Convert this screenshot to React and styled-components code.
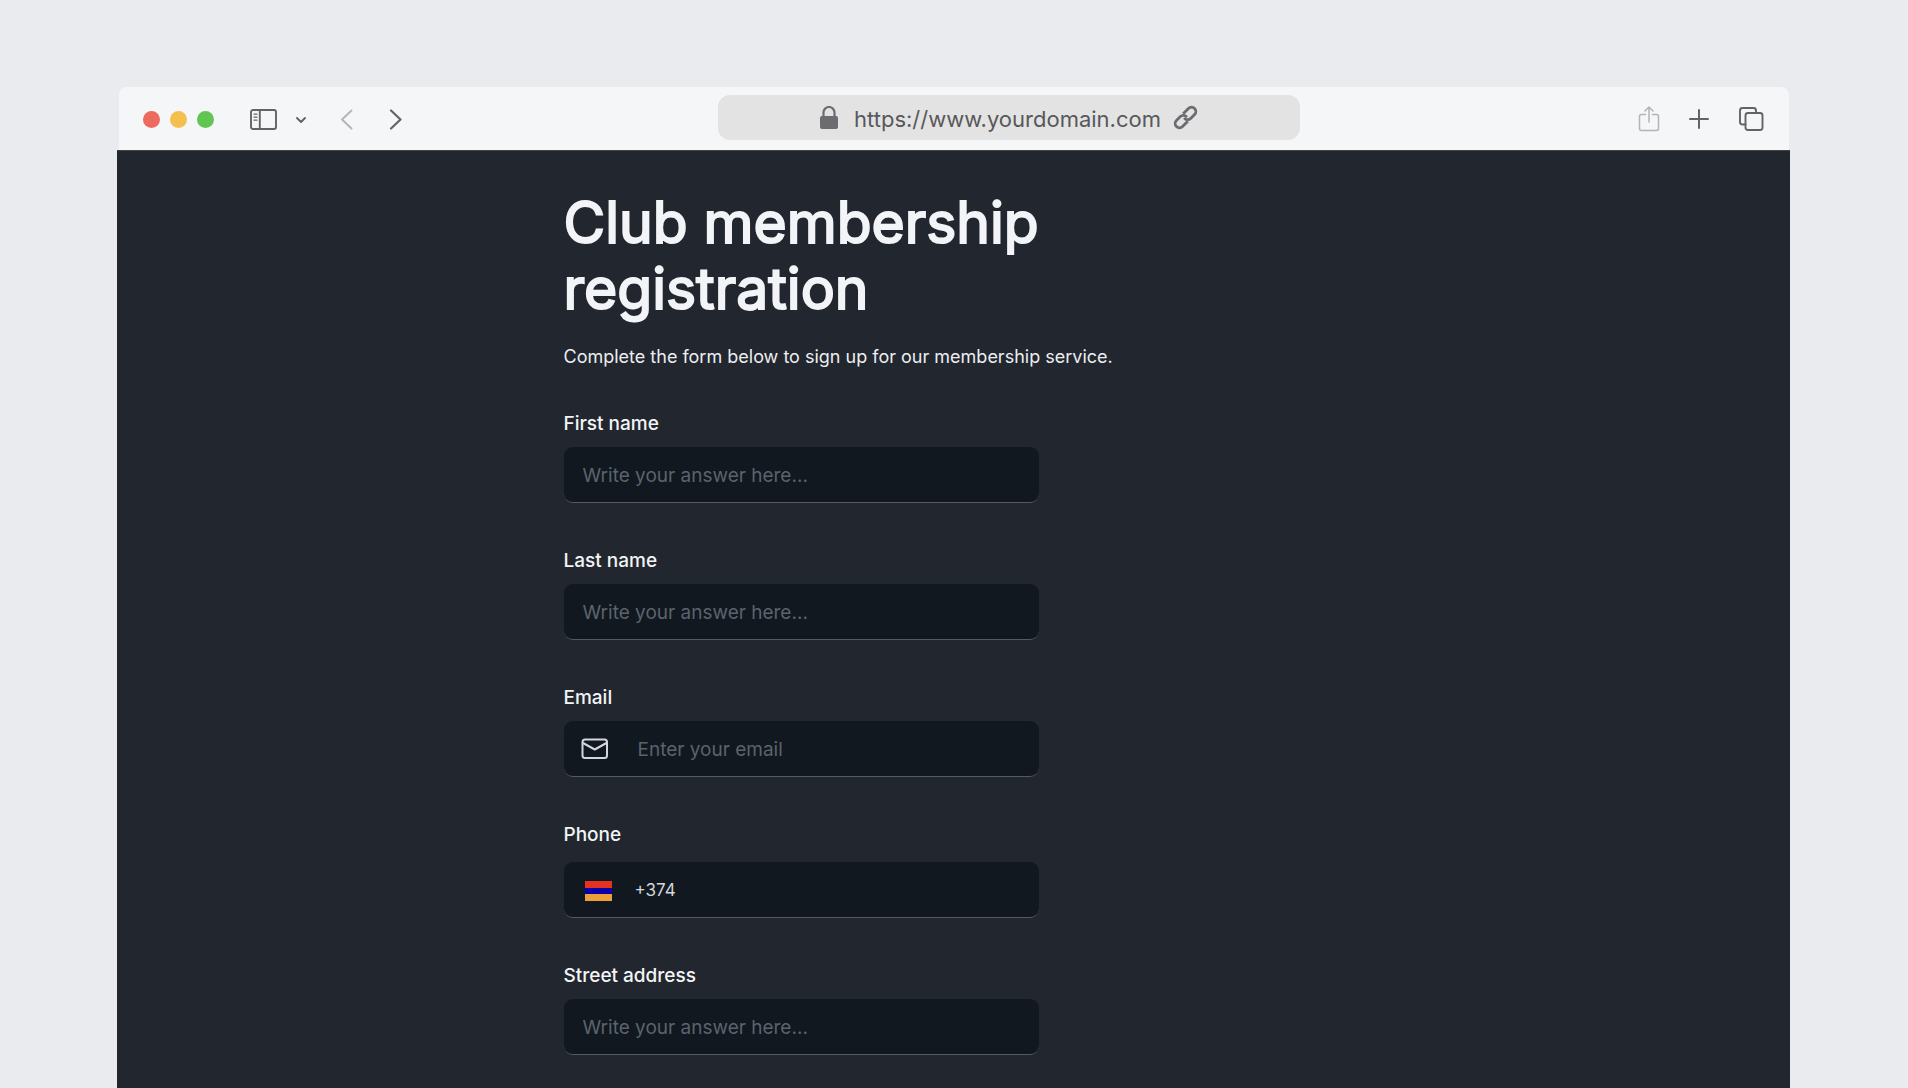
import styled, { createGlobalStyle } from "styled-components";
import React, { useState } from "react";

const GlobalStyle = createGlobalStyle`
  * { box-sizing: border-box; }
  body {
    margin: 0;
    background: #e9ebef;
    font-family: Inter, "Liberation Sans", sans-serif;
  }
`;

const Page = styled.div`
  display: flex;
  flex-direction: column;
  height: 100vh;
  padding: 87px 118px 0 117px;
  overflow: hidden;
`;

const Toolbar = styled.header`
  display: grid;
  grid-template-columns: 599fr 582fr 489fr;
  align-items: center;
  flex-shrink: 0;
  height: 63px;
  margin: 0 1px 0 2px;
  background: #f5f6f8;
  border-radius: 8px 8px 0 0;
`;

const Group = styled.div`
  display: flex;
  align-items: center;
  gap: ${(p) => p.$gap || 0}px;
  padding: ${(p) => p.$pad || "0"};
  justify-content: ${(p) => (p.$end ? "flex-end" : "flex-start")};
`;

const Dot = styled.span`
  width: 17px;
  height: 17px;
  border-radius: 50%;
  background: ${(p) => p.$color};
`;

const IconButton = styled.button`
  display: flex;
  padding: 0;
  border: 0;
  background: none;
  color: ${(p) => (p.$muted ? "#b4b4b5" : "#636364")};
  cursor: pointer;

  svg {
    display: block;
    fill: none;
    stroke: currentColor;
    stroke-linecap: round;
    stroke-linejoin: round;
  }
`;

const AddressBar = styled.div`
  display: flex;
  align-items: center;
  justify-content: center;
  height: 45px;
  margin-bottom: 2px;
  border-radius: 12px;
  background: #e3e3e3;
  color: #6c6c70;
`;

const Address = styled.span`
  margin: 0 12px 0 16px;
  padding-top: 3px;
  color: #58585a;
  font-size: 22px;
  line-height: 28px;
`;

const Content = styled.main`
  flex: 1;
  min-height: 0;
  overflow: hidden;
  border-top: 1px solid #3f434a;
  background: #22262e;
`;

const Form = styled.form`
  max-width: 780px;
  margin: 0 auto;
  padding-top: 39px;
`;

const Title = styled.h1`
  max-width: 520px;
  margin: 0;
  color: #f3f4f7;
  font-size: 57px;
  font-weight: 400;
  line-height: 66px;
  -webkit-text-stroke: 2px #f3f4f7;
`;

const Intro = styled.p`
  margin: 22px 0 43px;
  color: #eceef1;
  font-size: 18px;
  line-height: 25px;
`;

const Field = styled.div`
  display: flex;
  flex-direction: column;
  gap: ${(p) => p.$gap || 11}px;
  max-width: 475px;
  margin-bottom: 46px;
`;

const Label = styled.label`
  color: #f3f4f6;
  font-size: 19px;
  font-weight: 500;
  line-height: 24px;
`;

const InputBox = styled.div`
  display: flex;
  align-items: center;
  height: 56px;
  padding: 0 ${(p) => p.$pad || 19}px;
  gap: ${(p) => p.$gap || 0}px;
  border-bottom: 1px solid #565b63;
  border-radius: 9px;
  background: #111820;
  color: #d3d6dc;

  svg {
    flex-shrink: 0;
  }
`;

const Input = styled.input`
  flex: 1;
  min-width: 0;
  padding: ${(p) => (p.$size ? 0 : 3)}px 0 0;
  border: 0;
  outline: 0;
  background: none;
  color: #d3d6dc;
  font-family: inherit;
  font-size: ${(p) => p.$size || 19}px;
  line-height: 24px;

  &::placeholder {
    color: #5c636c;
    opacity: 1;
  }
`;

const Flag = styled.span`
  flex-shrink: 0;
  width: 27px;
  height: 20px;
  margin-top: 2px;
  background: linear-gradient(#e63222 33%, #0a00a8 33% 65%, #eca03a 65%);
`;

function MailIcon() {
  return (
    <svg width="28" height="22" viewBox="0 0 28 22" fill="none" stroke="currentColor" strokeWidth="2" strokeLinejoin="round">
      <rect x="1.5" y="1.5" width="24.5" height="18.5" rx="2.5" />
      <path d="M2 5l11.75 6.5L25.5 5" />
    </svg>
  );
}

function LockIcon() {
  return (
    <svg width="18" height="23" viewBox="0 0 18 23">
      <path d="M3.5 10.5V6.5a5.5 5.5 0 0 1 11 0v4" fill="none" stroke="currentColor" strokeWidth="2.2" />
      <rect x="0" y="10" width="18" height="13" rx="2" fill="currentColor" />
    </svg>
  );
}

// two round-ended links lying on one diagonal
function LinkIcon() {
  return (
    <svg width="25" height="25" viewBox="0 0 25 25" fill="none" stroke="currentColor" strokeWidth="2.8">
      <g transform="rotate(-45 12.5 12.5)">
        <path d="M11.5 16.8H4a4.3 4.3 0 0 1 0-8.600h5.500a4.300 4.300 0 0 1 4.200 5" />
        <path d="M13.5 8.2H21a4.3 4.3 0 0 1 0 8.600h-5.500a4.300 4.300 0 0 1-4.200-5" />
      </g>
    </svg>
  );
}

function BrowserBar() {
  return (
    <Toolbar>
      <Group $pad="2px 0 0 24px">
        <Group $gap={10}>
          <Dot $color="#ec6a5e" />
          <Dot $color="#f4bf4f" />
          <Dot $color="#61c554" />
        </Group>
        <Group $pad="0 0 0 36px">
          <IconButton type="button" aria-label="Sidebar">
            <svg width="27" height="21" viewBox="0 0 27 21" strokeWidth="1.9">
              <rect x="1" y="1" width="25" height="19" rx="2" />
              <path d="M9.8 1v19" />
              <path d="M4 5.2h3M4 8.2h3M4 11.2h3" strokeWidth="1.2" />
            </svg>
          </IconButton>
        </Group>
        <Group $pad="0 0 0 18px">
          <IconButton type="button" aria-label="Tab groups">
            <svg width="12" height="8" viewBox="0 0 12 8" strokeWidth="1.9">
              <path d="M2 2l4 4 4-4" />
            </svg>
          </IconButton>
        </Group>
        <Group $gap={36} $pad="0 0 0 33px">
          <IconButton type="button" aria-label="Back" $muted>
            <svg width="13" height="21" viewBox="0 0 13 21" strokeWidth="1.9">
              <path d="M11.5 1.5 2 10.5l9.5 9" />
            </svg>
          </IconButton>
          <IconButton type="button" aria-label="Forward">
            <svg width="13" height="21" viewBox="0 0 13 21" strokeWidth="2.2">
              <path d="M2 1.5l9.5 9-9.5 9" />
            </svg>
          </IconButton>
        </Group>
      </Group>
      <AddressBar>
        <LockIcon />
        <Address>https://www.yourdomain.com</Address>
        <LinkIcon />
      </AddressBar>
      <Group $gap={29} $pad="0 25px 0 0" $end>
        <IconButton type="button" aria-label="Share" $muted>
          <svg width="22" height="26" viewBox="0 0 22 26" strokeWidth="1.5">
            <path d="M7.5 8.5h-4a2 2 0 0 0-2 2v12a2 2 0 0 0 2 2h15a2 2 0 0 0 2-2v-12a2 2 0 0 0-2-2h-4" />
            <path d="M11 16V1.5M7 5l4-4 4 4" />
          </svg>
        </IconButton>
        <IconButton type="button" aria-label="New tab">
          <svg width="20" height="20" viewBox="0 0 20 20" strokeWidth="2">
            <path d="M10 1v18M1 10h18" />
          </svg>
        </IconButton>
        <IconButton type="button" aria-label="Tab overview">
          <svg width="26" height="26" viewBox="0 0 26 26" strokeWidth="1.9">
            <path d="M7.5 18.5h-3A2.5 2.5 0 0 1 2 16V4.5A2.5 2.5 0 0 1 4.5 2h11A2.5 2.5 0 0 1 18 4.5V7" />
            <rect x="7.5" y="7" width="17" height="17" rx="2.5" />
          </svg>
        </IconButton>
      </Group>
    </Toolbar>
  );
}

function App() {
  const [user, setUser] = useState({
    firstName: "",
    lastName: "",
    email: "",
    phone: "+374",
    street: "",
  });

  const putUserInfo = (e) => {
    const { name, value } = e.target;
    setUser({ ...user, [name]: value });
  };

  const textField = (name, label) => (
    <Field>
      <Label htmlFor={name}>{label}</Label>
      <InputBox>
        <Input id={name} name={name} placeholder="Write your answer here..." value={user[name]} onChange={putUserInfo} />
      </InputBox>
    </Field>
  );

  return (
    <>
      <GlobalStyle />
      <Page>
        <BrowserBar />
        <Content>
          <Form>
            <Title>Club membership registration</Title>
            <Intro>Complete the form below to sign up for our membership service.</Intro>
            {textField("firstName", "First name")}
            {textField("lastName", "Last name")}
            <Field>
              <Label htmlFor="email">Email</Label>
              <InputBox $pad={17} $gap={29}>
                <MailIcon />
                <Input id="email" name="email" type="email" placeholder="Enter your email" value={user.email} onChange={putUserInfo} />
              </InputBox>
            </Field>
            {/* the country flag goes with the dial code */}
            <Field $gap={15}>
              <Label htmlFor="phone">Phone</Label>
              <InputBox $pad={21} $gap={23}>
                <Flag />
                <Input id="phone" name="phone" type="tel" $size={17} value={user.phone} onChange={putUserInfo} />
              </InputBox>
            </Field>
            {textField("street", "Street address")}
          </Form>
        </Content>
      </Page>
    </>
  );
}

export default App;
